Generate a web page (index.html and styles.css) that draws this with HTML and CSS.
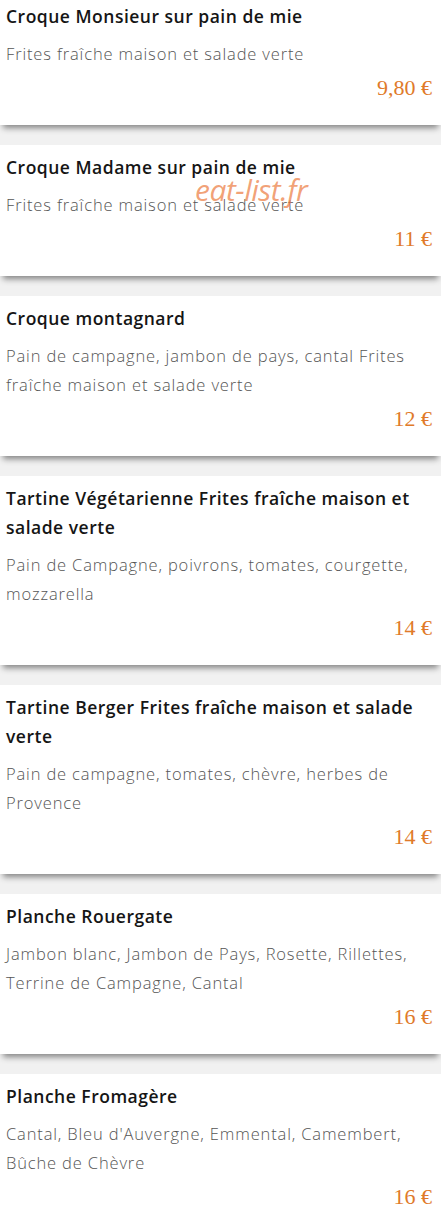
FILE: index.html
```html
<!DOCTYPE html>
<html lang="fr">

<head>
    <meta charset="UTF-8">
    <title>Carte</title>
    <link rel="stylesheet" href="styles.css">
</head>

<body>

    <div class="menu">
        <div class="item">
            <div class="name">Croque Monsieur sur pain de mie</div>
            <div class="desc">Frites fraîche maison et salade verte</div>
            <div class="price">9,80 €</div>
        </div>
        <div class="item">
            <div class="name">Croque Madame sur pain de mie</div>
            <div class="desc">Frites fraîche maison et salade verte</div>
            <div class="price">11 €</div>
            <span class="watermark">eat-list.fr</span>
        </div>
        <div class="item">
            <div class="name">Croque montagnard</div>
            <div class="desc">Pain de campagne, jambon de pays, cantal Frites fraîche maison et salade verte</div>
            <div class="price">12 €</div>
        </div>
        <div class="item">
            <div class="name">Tartine Végétarienne Frites fraîche maison et salade verte</div>
            <div class="desc">Pain de Campagne, poivrons, tomates, courgette, mozzarella</div>
            <div class="price">14 €</div>
        </div>
        <div class="item">
            <div class="name">Tartine Berger Frites fraîche maison et salade verte</div>
            <div class="desc">Pain de campagne, tomates, chèvre, herbes de Provence</div>
            <div class="price">14 €</div>
        </div>
        <div class="item">
            <div class="name">Planche Rouergate</div>
            <div class="desc">Jambon blanc, Jambon de Pays, Rosette, Rillettes, Terrine de Campagne, Cantal</div>
            <div class="price">16 €</div>
        </div>
        <div class="item">
            <div class="name">Planche Fromagère</div>
            <div class="desc">Cantal, Bleu d'Auvergne, Emmental, Camembert, Bûche de Chèvre</div>
            <div class="price">16 €</div>
        </div>
    </div>

</body>

</html>
```

FILE: styles.css
```css
body {
    margin: 0;
    background: #f1f1f1;
    font-family: 'Open Sans', Lato, sans-serif;
    overflow: hidden;
}

.menu {
    display: flex;
    flex-direction: column;
    gap: 20px;
    margin-top: -6px;
}

.item {
    position: relative;
    background: #fff;
    padding: 8px 9px 22px 6px;
    box-shadow: 0 6px 6px -3px rgba(0, 0, 0, 0.45);
}

.name {
    font-size: 17.5px;
    line-height: 29px;
    color: #151515;
    font-weight: 600;
    letter-spacing: 0.5px;
}

.desc {
    margin-top: 8px;
    font-size: 16.5px;
    line-height: 29px;
    color: #555;
    font-weight: 300;
    letter-spacing: 0.85px;
}

.price {
    margin-top: 5px;
    text-align: right;
    font-family: 'Liberation Serif', serif;
    font-size: 22px;
    line-height: 30px;
    color: #e07a2a;
}

.watermark {
    position: absolute;
    left: 195px;
    top: 24px;
    font-family: 'Open Sans', sans-serif;
    font-style: italic;
    font-size: 30px;
    color: rgba(236, 120, 60, 0.7);
    letter-spacing: -0.5px;
}
```
